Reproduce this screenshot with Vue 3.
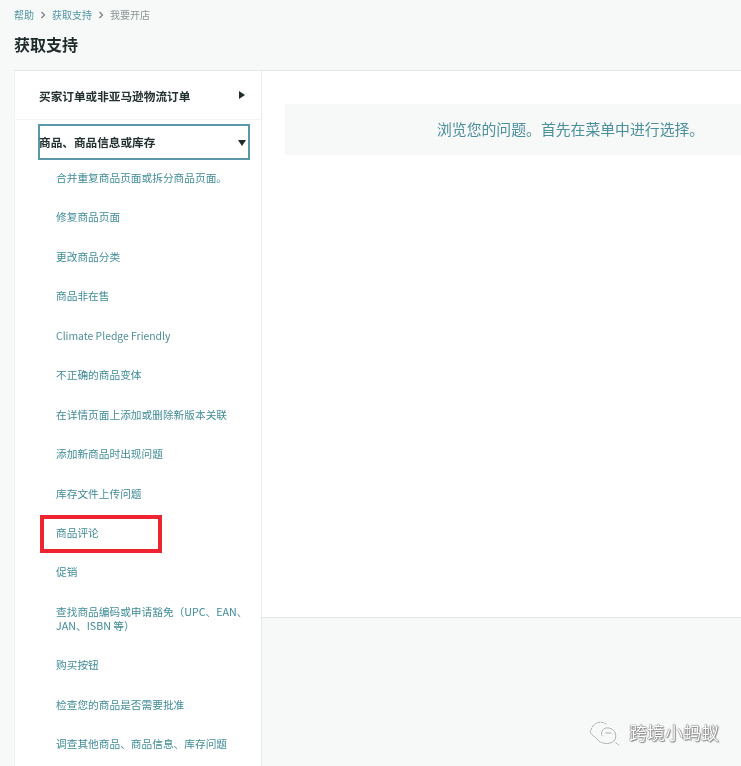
<script setup>
const items = [
  '合并重复商品页面或拆分商品页面。',
  '修复商品页面',
  '更改商品分类',
  '商品非在售',
  'Climate Pledge Friendly',
  '不正确的商品变体',
  '在详情页面上添加或删除新版本关联',
  '添加新商品时出现问题',
  '库存文件上传问题',
  '商品评论',
  '促销',
  '查找商品编码或申请豁免（UPC、EAN、JAN、ISBN 等）',
  '购买按钮',
  '检查您的商品是否需要批准',
  '调查其他商品、商品信息、库存问题'
]
</script>

<template>
  <div class="page">
    <nav class="crumbs soft">
      <a>帮助</a>
      <svg class="chev" viewBox="0 0 6 8"><path d="M1.5 1 L4.5 4 L1.5 7" /></svg>
      <a>获取支持</a>
      <svg class="chev" viewBox="0 0 6 8"><path d="M1.5 1 L4.5 4 L1.5 7" /></svg>
      <span>我要开店</span>
    </nav>
    <h1 class="title soft">获取支持</h1>

    <div class="panel">
      <aside class="side">
        <div class="head closed">
          <span class="soft">买家订单或非亚马逊物流订单</span>
          <i class="tri-right"></i>
        </div>
        <div class="head open">
          <span class="soft">商品、商品信息或库存</span>
          <i class="tri-down"></i>
        </div>
        <ul class="list">
          <li v-for="(t, i) in items" :key="i" class="item">
            <span class="soft" :class="{ latin: i === 4 }">{{ t }}</span>
            <b v-if="i === 9" class="mark"></b>
          </li>
        </ul>
      </aside>
      <div class="rightcol">
        <main class="main">
          <div class="hint"><span class="soft">浏览您的问题。首先在菜单中进行选择。</span></div>
        </main>
        <div class="foot">
          <div class="wm">
            <svg class="wm-ic" viewBox="0 0 34 28">
              <g fill="none" stroke="#fff" stroke-width="2.4" stroke-linecap="round">
                <path d="M2 13 C3 18 7 18 9 21 C12 26 22 27 26 23 C30 18 27 11 21 10 C16 9 12 13 14 18" />
              </g>
              <g fill="none" stroke="#a3a3a3" stroke-width="0.9" stroke-linecap="round">
                <path d="M3 12 C5 5 12 2 18 6" stroke-dasharray="2 1.5" />
                <path d="M2 13 C3 18 7 18 9 21 C12 26 22 27 26 23 C30 18 27 11 21 10 C16 9 12 13 14 18" />
                <path d="M18 15 L23 15" />
                <path d="M28 25 L31 27" stroke-dasharray="1.5 1.5" />
              </g>
            </svg>
            <span class="wm-t soft">跨境小蚂蚁</span>
          </div>
        </div>
      </div>
    </div>
  </div>
</template>

<style>
html, body { margin: 0; background: #f7f8f8; }
</style>

<style scoped>
.page {
  width: 741px;
  height: 766px;
  overflow: hidden;
  box-sizing: border-box;
  padding: 8px 0 0 14px;
  background: #f7f8f8;
  font-family: "Noto Sans CJK SC", "Noto Sans", sans-serif;
}
.soft { filter: blur(0.35px); }
.crumbs {
  display: flex;
  align-items: center;
  gap: 5px;
  height: 14px;
  font-size: 10px;
  line-height: 14px;
  color: #8b9595;
}
.crumbs a { color: #4f95a3; }
.chev { width: 6px; height: 8px; margin: 0 1px; }
.chev path { fill: none; stroke: #6f7a7a; stroke-width: 1.1; }
.title {
  margin: 10px 0 0;
  height: 24px;
  font-size: 16px;
  line-height: 24px;
  font-weight: 700;
  color: #1f2b2b;
}
.panel {
  display: flex;
  margin-top: 14px;
  height: 696px;
  background: #fff;
  border-top: 1px solid #e6e8e8;
}
.side {
  width: 248px;
  flex: none;
  box-sizing: border-box;
  background: #fff;
  border-left: 1px solid #f1f2f2;
  border-right: 1px solid #e8eaea;
}
.head {
  display: flex;
  align-items: center;
  justify-content: space-between;
  font-size: 11.65px;
  font-weight: 700;
  color: #22302f;
}
.closed {
  height: 49px;
  padding: 0 15px 0 24px;
  box-sizing: border-box;
  border-bottom: 1px solid #f2f3f3;
}
.open {
  height: 36px;
  margin: 4px 11px 0 23px;
  padding: 0 2px 2px 0;
  box-sizing: border-box;
  border: 2px solid #5c97a8;
}
.open .soft { margin-left: -1px; }
.tri-right {
  width: 0;
  height: 0;
  border-left: 6px solid #1f2b2b;
  border-top: 4px solid transparent;
  border-bottom: 4px solid transparent;
  margin-right: 1px;
}
.tri-down {
  width: 0;
  height: 0;
  border-top: 6px solid #1f2b2b;
  border-left: 4px solid transparent;
  border-right: 4px solid transparent;
  margin-top: 4px;
}
.list {
  list-style: none;
  margin: 0;
  padding: 0 0 0 41px;
}
.item {
  position: relative;
  width: 192px;
  padding: 12.72px 0;
  font-size: 10.7px;
  line-height: 14px;
  color: #3f8b98;
}
.item:first-child { padding-top: 11px; }
.latin { font-size: 10.4px; color: #4f8f9a; }
.mark {
  position: absolute;
  left: -16px;
  top: 2px;
  width: 122px;
  height: 38px;
  box-sizing: border-box;
  border: 4px solid #ee2530;
}
.rightcol {
  flex: 1;
  display: flex;
  flex-direction: column;
  min-width: 0;
}
.main {
  height: 547px;
  flex: none;
  padding: 33px 0 0 23px;
  box-sizing: border-box;
  background: #fff;
  border-bottom: 1px solid #e6e7e7;
}
.hint {
  height: 51px;
  padding-left: 152px;
  background: #f7f8f8;
  font-size: 14.85px;
  line-height: 49px;
  color: #4a8f9c;
  white-space: nowrap;
}
.foot {
  flex: 1;
  position: relative;
  background: #f7f8f8;
}
.wm {
  position: absolute;
  right: 22px;
  top: 100px;
  display: flex;
  align-items: center;
  gap: 7px;
}
.wm-ic { width: 34px; height: 28px; }
.wm-t {
  font-size: 18px;
  line-height: 26px;
  color: #fff;
  text-shadow: 0 0 1px #444, 0 0 1px #666, 1px 1px 1px #999;
}
</style>
